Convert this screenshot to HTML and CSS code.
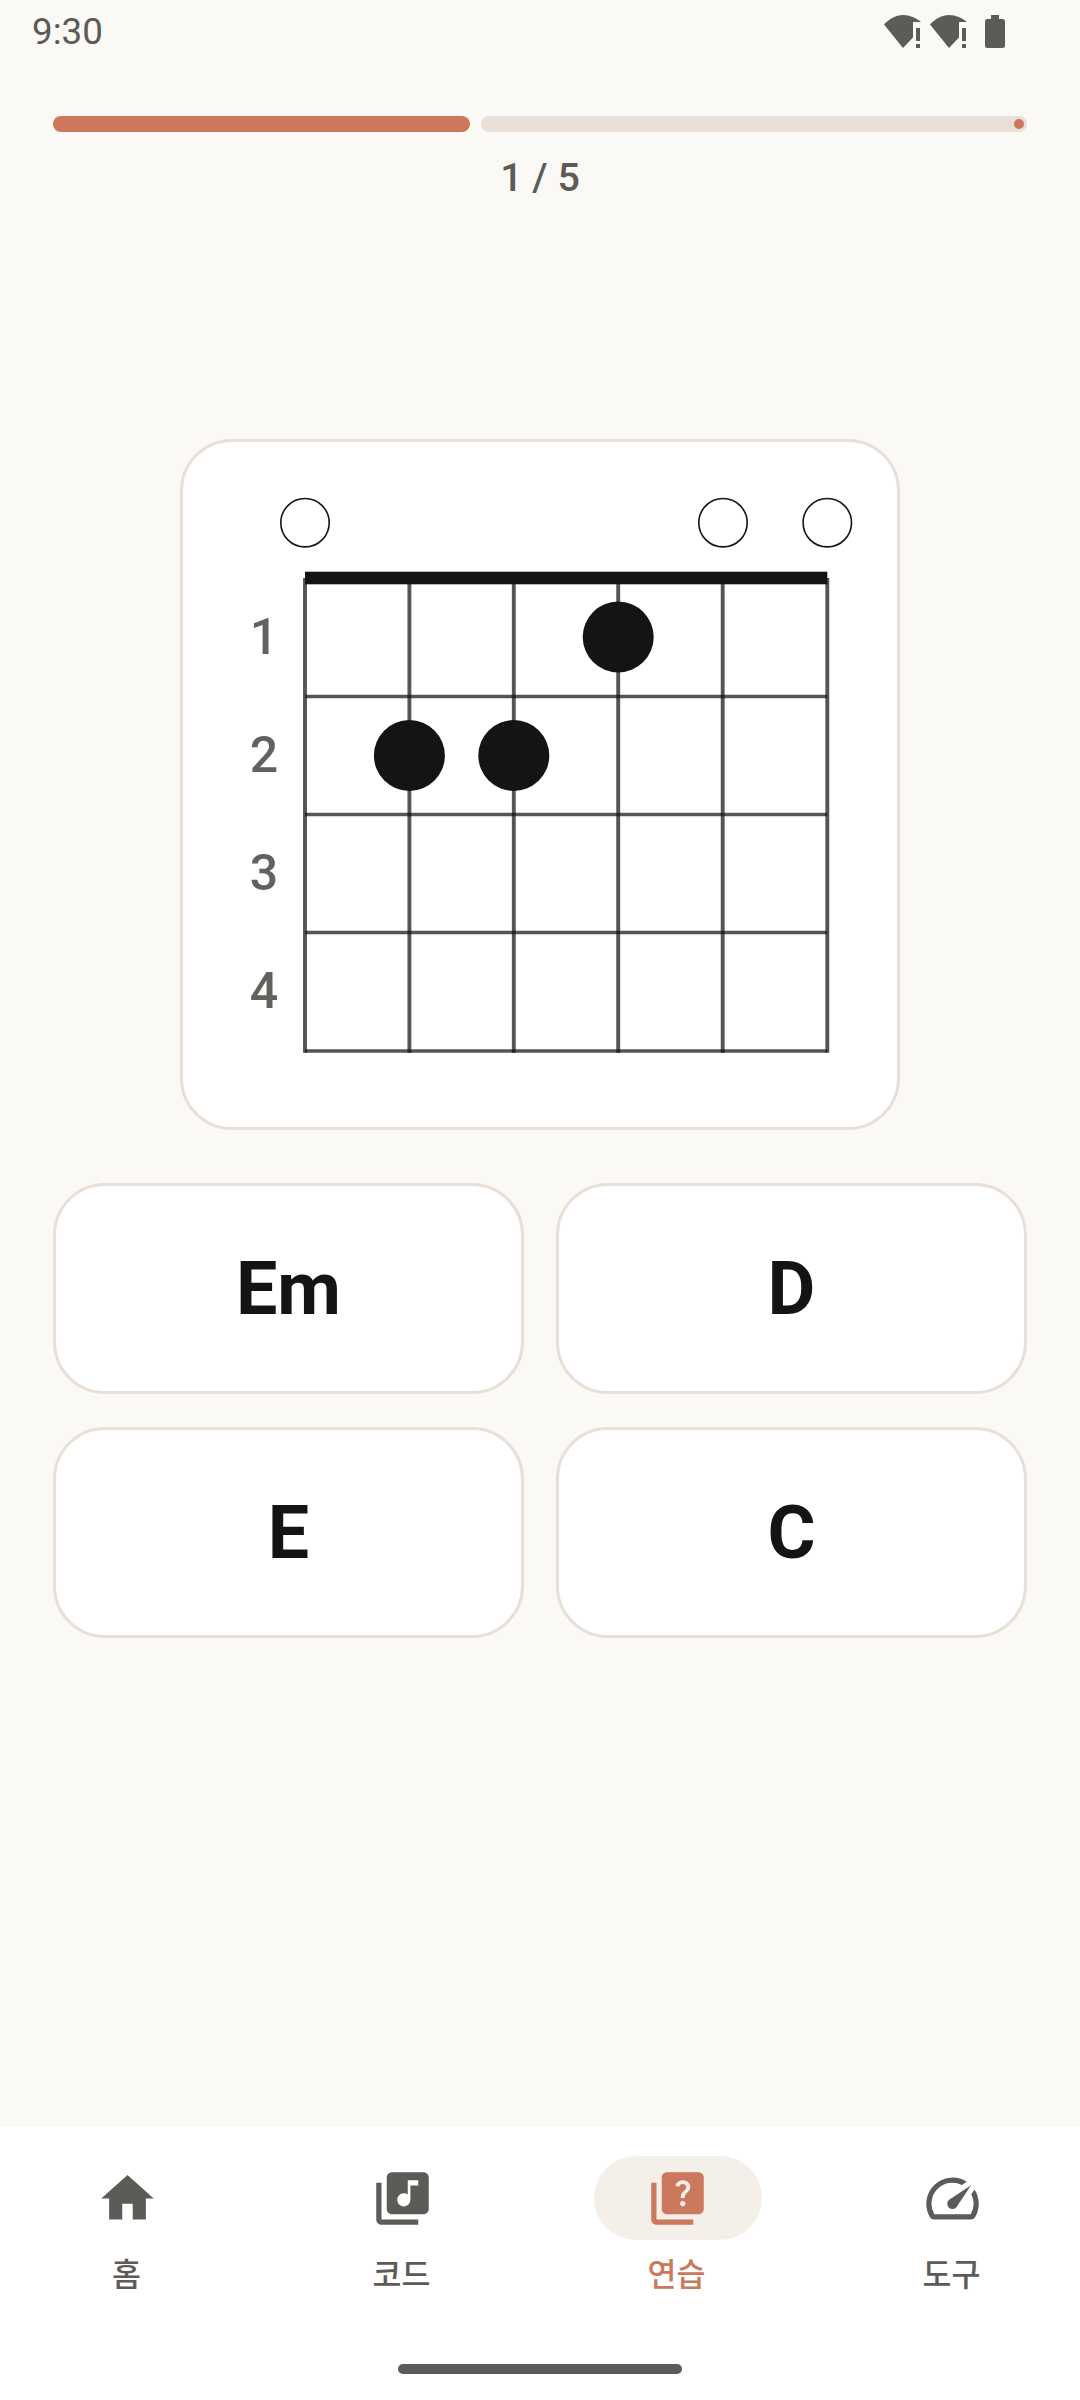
FILE: index.html
```html
<!DOCTYPE html>
<html lang="ko">
<head>
<meta charset="utf-8">
<title>연습</title>
<link rel="stylesheet" href="styles.css">
</head>
<body>
<div class="page">
  <header class="status">
    <span class="time">9:30</span>
    <div class="status-icons">
      <svg class="wifi" viewBox="0 0 38 34"><path d="M19 33 L0 9.500 C5 4 12 0 19 0 C26 0 32 3 37 7 L29 7 L29 22.500 Z"/><rect x="32" y="13" width="4" height="13"/><rect x="32" y="29" width="4" height="4"/></svg>
      <svg class="wifi" viewBox="0 0 38 34"><path d="M19 33 L0 9.500 C5 4 12 0 19 0 C26 0 32 3 37 7 L29 7 L29 22.500 Z"/><rect x="32" y="13" width="4" height="13"/><rect x="32" y="29" width="4" height="4"/></svg>
      <svg class="battery" viewBox="0 0 20 33"><path d="M6 0h8v4h3.500a2.500 2.500 0 0 1 2.500 2.500v24a2.500 2.500 0 0 1-2.500 2.500h-15a2.500 2.500 0 0 1-2.500-2.500v-24a2.500 2.500 0 0 1 2.500-2.500h3.500z"/></svg>
    </div>
  </header>

  <main class="main">
    <div class="progress">
      <div class="progress-fill"></div>
      <div class="progress-track"><span class="progress-dot"></span></div>
    </div>
    <div class="count">1 / 5</div>

    <section class="card">
      <svg class="chord" viewBox="183 442 714.500 684.500" width="714.500" height="684.500">
        <g class="open">
          <circle cx="305" cy="522.700" r="24.200"/>
          <circle cx="723" cy="522.700" r="24.200"/>
          <circle cx="827.300" cy="522.700" r="24.200"/>
        </g>
        <g class="strings">
          <line x1="305" y1="578" x2="305" y2="1052.700"/>
          <line x1="409.400" y1="578" x2="409.400" y2="1052.700"/>
          <line x1="513.800" y1="578" x2="513.800" y2="1052.700"/>
          <line x1="618.200" y1="578" x2="618.200" y2="1052.700"/>
          <line x1="722.700" y1="578" x2="722.700" y2="1052.700"/>
          <line x1="827.300" y1="578" x2="827.300" y2="1052.700"/>
        </g>
        <g class="frets">
          <line x1="305" y1="696.500" x2="827.300" y2="696.500"/>
          <line x1="305" y1="814.500" x2="827.300" y2="814.500"/>
          <line x1="305" y1="932.500" x2="827.300" y2="932.500"/>
          <line x1="305" y1="1051" x2="827.300" y2="1051"/>
        </g>
        <rect class="nut" x="305" y="571.700" width="522.300" height="12.600"/>
        <g class="dots">
          <circle cx="618.200" cy="637" r="35.500"/>
          <circle cx="409.400" cy="755.500" r="35.500"/>
          <circle cx="513.800" cy="755.500" r="35.500"/>
        </g>
        <g class="fret-nums">
          <text x="264" y="653.500">1</text>
          <text x="264" y="771.500">2</text>
          <text x="264" y="889.500">3</text>
          <text x="264" y="1007.500">4</text>
        </g>
      </svg>
    </section>

    <div class="answers">
      <button class="answer">Em</button>
      <button class="answer">D</button>
      <button class="answer">E</button>
      <button class="answer">C</button>
    </div>
  </main>

  <nav class="nav">
    <div class="nav-items">
      <div class="nav-item">
        <div class="nav-pill"><svg viewBox="0 0 24 24"><path d="M10 20v-6h4v6h5v-8h3L12 3 2 12h3v8z"/></svg></div>
        <span class="nav-label">홈</span>
      </div>
      <div class="nav-item">
        <div class="nav-pill"><svg viewBox="0 0 24 24"><path d="M20 2H8c-1.100 0-2 .9-2 2v12c0 1.100.9 2 2 2h12c1.100 0 2-.9 2-2V4c0-1.100-.9-2-2-2zm-2 5h-3v5.500c0 1.380-1.120 2.500-2.500 2.500S10 13.880 10 12.500s1.120-2.500 2.500-2.500c.57 0 1.080.19 1.500.51V5h4v2zM4 6H2v14c0 1.100.9 2 2 2h14v-2H4V6z"/></svg></div>
        <span class="nav-label">코드</span>
      </div>
      <div class="nav-item active">
        <div class="nav-pill"><svg viewBox="0 0 24 24"><path d="M4,6H2v14c0,1.100,0.900,2,2,2h14v-2H4V6z M20,2H8C6.900,2,6,2.900,6,4v12c0,1.100,0.900,2,2,2h12c1.100,0,2-0.900,2-2V4C22,2.900,21.100,2,20,2z M14.010,15c-0.590,0-1.050-0.470-1.050-1.050c0-0.590,0.470-1.040,1.050-1.040c0.590,0,1.040,0.450,1.040,1.040C15.050,14.530,14.600,15,14.010,15z M16.510,8.830c-0.630,0.930-1.230,1.210-1.560,1.810c-0.130,0.240-0.180,0.400-0.180,1.180h-1.520c0-0.410-0.060-1.080,0.260-1.650c0.410-0.730,1.180-1.160,1.630-1.800c0.480-0.680,0.210-1.940-1.140-1.940c-0.880,0-1.320,0.670-1.500,1.230l-1.370-0.570C11.510,5.960,12.520,5,13.990,5c1.230,0,2.080,0.560,2.510,1.260C16.880,6.870,17.110,7.990,16.510,8.830z"/></svg></div>
        <span class="nav-label">연습</span>
      </div>
      <div class="nav-item">
        <div class="nav-pill"><svg viewBox="0 0 24 24"><path d="M20.380 8.570l-1.230 1.850a8 8 0 0 1-.22 7.580H5.070A8 8 0 0 1 15.580 6.850l1.850-1.230A10 10 0 0 0 3.350 19a2 2 0 0 0 1.720 1h13.850a2 2 0 0 0 1.740-1 10 10 0 0 0-.27-10.440z"/><path d="M10.590 15.410a2 2 0 0 0 2.830 0l5.660-8.490-8.490 5.660a2 2 0 0 0 0 2.830z"/></svg></div>
        <span class="nav-label">도구</span>
      </div>
    </div>
    <div class="home-bar"></div>
  </nav>
</div>
</body>
</html>
```

FILE: styles.css
```css
* { box-sizing: border-box; }

html, body { margin: 0; padding: 0; }

body {
  background: #fbf9f5;
  font-family: Roboto, "Noto Sans CJK KR", sans-serif;
}

.page {
  width: 1080px;
  height: 2400px;
  display: flex;
  flex-direction: column;
  overflow: hidden;
  background: #fbf9f5;
}

/* Status bar */
.status {
  height: 63px;
  display: flex;
  align-items: center;
  justify-content: space-between;
  padding: 0 75px 0 32px;
  flex: none;
}

.time {
  font-size: 36.75px;
  line-height: 63px;
  color: #5c5b57;
}

.status-icons {
  display: flex;
  align-items: center;
  gap: 8px;
}

.wifi { width: 38px; height: 34px; fill: #5c5b57; display: block; }
.battery { width: 20px; height: 33px; fill: #5c5b57; display: block; margin-left: 9px; }

/* Main */
.main {
  flex: 1;
  display: flex;
  flex-direction: column;
  padding: 53px 53px 0;
}

.progress {
  display: flex;
  gap: 10.7px;
  height: 16px;
  flex: none;
}

.progress-fill {
  width: 417px;
  background: #cc785c;
  border-radius: 8px;
}

.progress-track {
  flex: 1;
  position: relative;
  background: #e8dfd7;
  border-radius: 8px;
}

.progress-dot {
  position: absolute;
  right: 3px;
  top: 3px;
  width: 10px;
  height: 10px;
  border-radius: 50%;
  background: #cc785c;
}

.count {
  margin-top: 21.5px;
  font-size: 39.4px;
  line-height: 48px;
  font-weight: 500;
  text-align: center;
  color: #5c5b57;
}

/* Chord card */
.card {
  width: 720.5px;
  height: 690.5px;
  margin: 237.5px auto 0;
  background: #fff;
  border: 3px solid #e8dfd7;
  border-radius: 52px;
  flex: none;
}

.chord { display: block; }

.open circle { fill: #fff; stroke: #141412; stroke-width: 1.6; }
.strings line { stroke: #141412; stroke-opacity: 0.72; stroke-width: 3.9; }
.frets line { stroke: #141412; stroke-opacity: 0.72; stroke-width: 3.3; }
.nut { fill: #141412; }
.dots circle { fill: #141412; }

.fret-nums text {
  font-family: Roboto, sans-serif;
  font-size: 50px;
  font-weight: 500;
  fill: #62615d;
  text-anchor: middle;
}

/* Answers */
.answers {
  margin-top: 53.5px;
  display: grid;
  grid-template-columns: 1fr 1fr;
  grid-auto-rows: 211px;
  column-gap: 32px;
  row-gap: 33px;
}

.answer {
  background: #fff;
  border: 3px solid #e8dfd7;
  border-radius: 52px;
  font-family: Roboto, sans-serif;
  font-size: 73.5px;
  font-weight: 700;
  color: #141412;
  padding: 0;
}

/* Bottom nav */
.nav {
  flex: none;
  height: 273px;
  background: #fff;
  display: flex;
  flex-direction: column;
  align-items: center;
  padding-top: 29px;
}

.nav-items {
  width: 100%;
  display: flex;
  justify-content: space-between;
  padding: 0 43.5px;
}

.nav-item {
  width: 168px;
  display: flex;
  flex-direction: column;
  align-items: center;
  color: #5c5b57;
  fill: #5c5b57;
}

.nav-pill {
  width: 168px;
  height: 84px;
  border-radius: 42px;
  display: flex;
  align-items: center;
  justify-content: center;
}

.nav-pill svg { width: 63px; height: 63px; display: block; fill: inherit; }

.nav-label {
  margin-top: 12px;
  padding-right: 2px;
  font-family: "Noto Sans CJK KR", sans-serif;
  font-size: 31.5px;
  line-height: 40px;
  font-weight: 500;
}

.nav-item.active { color: #cc785c; fill: #cc785c; }
.nav-item.active .nav-pill { background: #f4efe9; }

.home-bar {
  width: 284px;
  height: 10px;
  margin-top: 72px;
  border-radius: 5px;
  background: #5c5b57;
}
```
